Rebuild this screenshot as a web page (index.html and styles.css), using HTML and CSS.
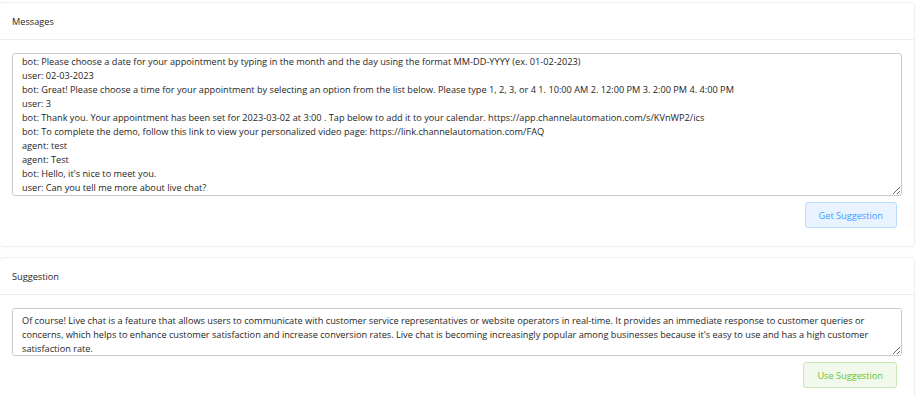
FILE: index.html
```html
<!DOCTYPE html>
<html>
<head>
<meta charset="utf-8">
<link rel="stylesheet" href="styles.css">
</head>
<body>
<div class="page">
  <section class="card">
    <div class="card-header">Messages</div>
    <div class="card-body">
      <textarea class="field field-messages" rows="10">bot: Please choose a date for your appointment by typing in the month and the day using the format MM-DD-YYYY (ex. 01-02-2023)
user: 02-03-2023
bot: Great! Please choose a time for your appointment by selecting an option from the list below. Please type 1, 2, 3, or 4 1. 10:00 AM 2. 12:00 PM 3. 2:00 PM 4. 4:00 PM
user: 3
bot: Thank you. Your appointment has been set for 2023-03-02 at 3:00 . Tap below to add it to your calendar. https://app.channelautomation.com/s/KVnWP2/ics
bot: To complete the demo, follow this link to view your personalized video page: https://link.channelautomation.com/FAQ
agent: test
agent: Test
bot: Hello, it's nice to meet you.
user: Can you tell me more about live chat?</textarea>
      <div class="actions">
        <button class="btn btn-primary">Get Suggestion</button>
      </div>
    </div>
  </section>
  <section class="card">
    <div class="card-header">Suggestion</div>
    <div class="card-body">
      <textarea class="field field-suggestion" rows="3">Of course! Live chat is a feature that allows users to communicate with customer service representatives or website operators in real-time. It provides an immediate response to customer queries or concerns, which helps to enhance customer satisfaction and increase conversion rates. Live chat is becoming increasingly popular among businesses because it's easy to use and has a high customer satisfaction rate.</textarea>
      <div class="actions">
        <button class="btn btn-success">Use Suggestion</button>
      </div>
    </div>
  </section>
</div>
</body>
</html>
```
FILE: styles.css
```css
* { box-sizing: border-box; }
html, body {
  margin: 0;
  padding: 0;
  background: #ffffff;
  overflow: hidden;
}
body {
  font-family: "Open Sans", "Liberation Sans", sans-serif;
  font-size: 9.2px;
  color: #262626;
}
.page {
  display: flex;
  flex-direction: column;
  gap: 10px;
  margin: 2px 5px 0 -1px;
}
.card {
  background: #ffffff;
  border: 1px solid #eef0f4;
  border-radius: 4px;
  box-shadow: 0 1px 3px rgba(0, 0, 0, 0.03);
}
.card-header {
  height: 37px;
  padding: 0 12px;
  display: flex;
  align-items: center;
  border-bottom: 1px solid #ebeef5;
  color: #262626;
}
.card-body {
  padding: 13px 12px 18px 12px;
  display: flex;
  flex-direction: column;
  gap: 6px;
}
.field {
  display: block;
  width: 100%;
  font-family: "Open Sans", "Liberation Sans", sans-serif;
  font-size: 9.2px;
  line-height: 14px;
  color: #262626;
  border: 1px solid #c8cad3;
  border-radius: 3px;
  padding: 1px 9px 0;
  background: #ffffff;
  resize: vertical;
  outline: none;
}
.field-messages { height: 143px; }
.field-suggestion { height: 48px; padding-top: 5px; }
.actions {
  display: flex;
  justify-content: flex-end;
  padding-right: 5px;
}
.btn {
  height: 26px;
  padding: 0 13px;
  font-family: "Open Sans", "Liberation Sans", sans-serif;
  font-size: 9.2px;
  border-radius: 3px;
  cursor: pointer;
}
.btn-primary {
  background: #e8f3ff;
  border: 1px solid #b8dbff;
  color: #409eff;
}
.btn-success {
  background: #f0f9eb;
  border: 1px solid #c6e8b6;
  color: #67c23a;
}
```
